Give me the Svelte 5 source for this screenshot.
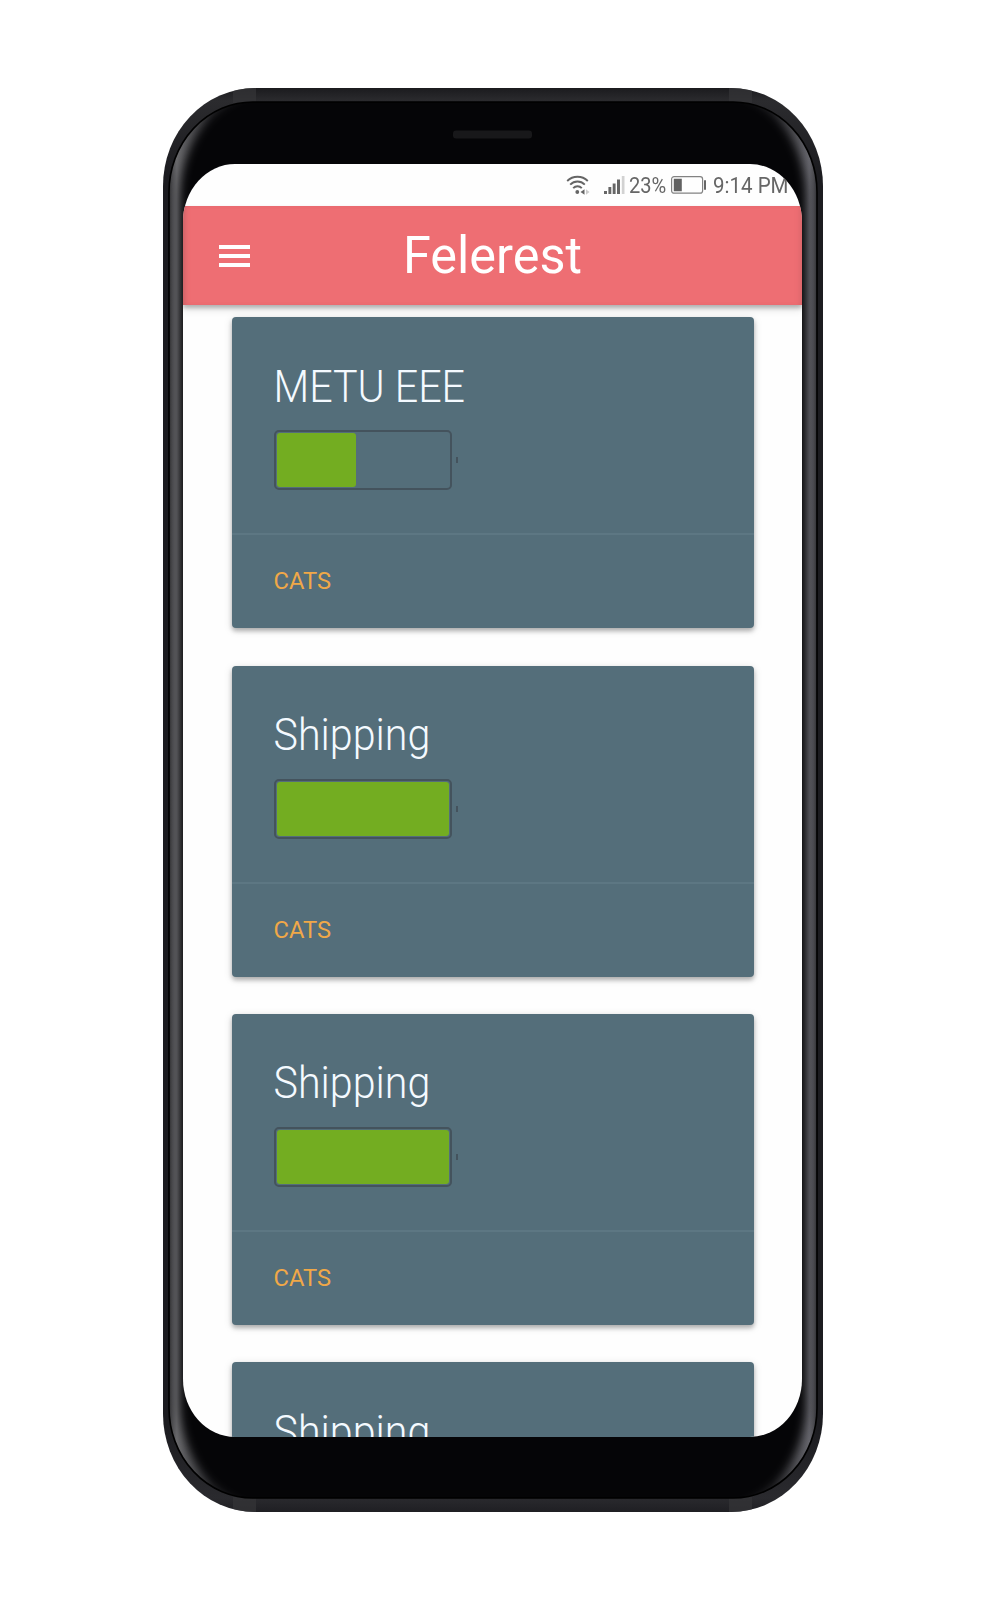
<script>
  const cards = [
    { title: 'METU EEE', level: 46 },
    { title: 'Shipping', level: 100 },
    { title: 'Shipping', level: 100 },
    { title: 'Shipping', level: 100 }
  ];
</script>

<main>
  <div class="phone">
    <svg class="shell" viewBox="0 0 660 1424" aria-hidden="true">
      <defs>
        <linearGradient id="side" x1="0" x2="1" y1="0" y2="0">
          <stop offset="0" stop-color="#2e2e30" />
          <stop offset=".005" stop-color="#4c4c4f" />
          <stop offset=".012" stop-color="#6c6c6f" />
          <stop offset=".03" stop-color="#58585b" />
          <stop offset=".07" stop-color="#2c2c2f" />
          <stop offset=".93" stop-color="#2c2c2f" />
          <stop offset=".97" stop-color="#55555a" />
          <stop offset=".988" stop-color="#67676e" />
          <stop offset=".995" stop-color="#4c4c51" />
          <stop offset="1" stop-color="#2e2e32" />
        </linearGradient>
        <linearGradient id="rim" x1="0" x2="0" y1="0" y2="1">
          <stop offset="0" stop-color="#1b1b1e" />
          <stop offset=".009" stop-color="#2b2b2e" />
          <stop offset=".06" stop-color="#1c1c20" />
          <stop offset=".94" stop-color="#1c1c20" />
          <stop offset=".99" stop-color="#2a2a2e" />
          <stop offset="1" stop-color="#1f1f23" />
        </linearGradient>
        <clipPath id="body"><rect width="660" height="1424" rx="92" ry="98" /></clipPath>
        <clipPath id="glass"><rect x="6" y="14" width="648" height="1396" rx="84" ry="90" /></clipPath>
        <filter id="soft" x="-10%" y="-10%" width="120%" height="120%" color-interpolation-filters="sRGB">
          <feGaussianBlur stdDeviation="5" />
        </filter>
      </defs>
      <g clip-path="url(#body)">
        <rect width="660" height="1424" fill="url(#rim)" />
        <path d="M70 0h23v15H70zM566 0h23v15h-23zM70 1409h23v15H70zM566 1409h23v15h-23z" fill="#343437" opacity=".75" />
      </g>
      <g clip-path="url(#glass)">
        <rect x="6" y="14" width="648" height="1396" fill="url(#side)" />
        <rect x="17" y="2" width="626" height="1420" rx="92" ry="108" fill="#050507" filter="url(#soft)" />
      </g>
      <rect x="6" y="14" width="648" height="1396" rx="84" ry="90" fill="none" stroke="#000" stroke-width="1.6" />
      <rect x="290" y="42.5" width="79" height="8" rx="3" fill="#18181a" />
    </svg>
    <div class="screen">
      <div class="status">
        <svg class="wifi" viewBox="0 0 24 22" fill="none" stroke="#656565" stroke-width="1.9">
          <path d="M1.2 7C7 1.4 16 1.4 21.8 7M4.2 10.6c4.1-4.2 10.5-4.2 14.6 0M7.2 14.2c2.4-2.6 6.2-2.6 8.6 0" />
          <circle cx="11.3" cy="18" r="1.9" fill="#656565" stroke="none" />
          <path d="M14.5 18l4-2.8v5.6z" fill="#656565" stroke="none" />
          <path d="M20 15.2l3.5 2.8-3.5 2.8z" fill="#ccc" stroke="none" />
        </svg>
        <svg class="signal" viewBox="0 0 21 20">
          <path d="M0 16h3v3H0zM4.4 12h2.9v7H4.4zM8.7 8.5h2.9V19H8.7zM13 4.5h3V19h-3z" fill="#666" />
          <path d="M17.8 1h2.7v18h-2.7z" fill="#d2d2d2" />
        </svg>
        <span class="percent">23%</span>
        <svg class="power" viewBox="0 0 36 18">
          <rect x=".6" y=".7" width="31" height="16.5" rx="2.5" fill="none" stroke="#828282" stroke-width="1.2" />
          <path d="M2.8 2.8h8v12.4h-8z" fill="#626262" />
          <path d="M33 4.2h2v9.6h-2z" fill="#666" />
        </svg>
        <span class="time">9:14 PM</span>
      </div>
      <header>
        <svg class="menu" viewBox="0 0 31 22"><path d="M0 0h31v4H0zM0 9h31v4H0zM0 18h31v4H0z" fill="#fff" /></svg>
        <h1>Felerest</h1>
      </header>
      <div class="list">
        {#each cards as card}
          <article>
            <div class="content">
              <h2>{card.title}</h2>
              <div class="battery">
                <div class="case"><div class="fill" style="width: {card.level}%"></div></div>
                <i></i>
              </div>
            </div>
            <div class="action"><span>CATS</span></div>
          </article>
        {/each}
      </div>
    </div>
  </div>
</main>

<style>
  :global(body) { background: #fff; }
  * { box-sizing: border-box; }
  main {
    height: 1600px;
    padding: 88px 0 0 163px;
    overflow: hidden;
    font-family: Roboto, sans-serif;
  }
  .phone {
    position: relative;
    width: 660px;
    height: 1424px;
    padding: 76px 21px 75px 20px;
  }
  .shell { position: absolute; inset: 0; width: 660px; height: 1424px; }
  .screen {
    position: relative;
    width: 619px;
    height: 1273px;
    overflow: hidden;
    border-radius: 52px / 58px;
    background: #fefefe;
  }
  .status {
    display: flex;
    height: 42px;
    padding: 0 0 0 383px;
    color: #666;
    font-size: 21.6px;
    line-height: 44px;
    white-space: nowrap;
  }
  .status svg { flex: none; }
  .status span { transform: scaleX(.95); transform-origin: left; }
  .wifi { width: 24px; height: 22px; margin-top: 10px; }
  .signal { width: 21px; height: 20px; margin: 11px 0 0 14px; }
  .percent { width: 38px; margin-left: 4px; }
  .status .percent { transform: scaleX(.93); }
  .power { width: 36px; height: 18px; margin: 12px 0 0 4px; }
  .time { margin-left: 6px; }
  header {
    position: relative;
    z-index: 1;
    display: grid;
    grid-template-columns: 35px 1fr 35px;
    align-items: center;
    height: 98.5px;
    background: #ee6e73;
    color: #fff;
    box-shadow: inset 5px 0 5px -3px #b95b60aa, inset -5px 0 5px -3px #b95b6066,
      0 3px 4px rgba(0, 0, 0, .24), 0 5px 8px rgba(0, 0, 0, .1);
  }
  .menu { width: 31px; height: 22px; margin: 1px 0 0 36px; }
  h1 {
    margin: 0;
    padding-top: 1.5px;
    font-size: 52px;
    line-height: 96px;
    font-weight: 400;
    text-align: center;
    transform: scaleX(.97);
  }
  .list { display: grid; gap: 37.4px; padding: 12.7px 48px 0 49px; }
  article {
    height: 311px;
    border-radius: 4px;
    background: #546e7a;
    box-shadow: 0 3px 4px rgba(0, 0, 0, .24), 0 2px 8px rgba(0, 0, 0, .15);
  }
  .content { height: 216px; padding: 41.5px 41.5px 0; }
  h2 {
    margin: 0;
    color: #f4faff;
    font-size: 43.6px;
    line-height: 56px;
    font-weight: 300;
    white-space: nowrap;
    transform: translate(-.5px, 1.3px) scaleX(.945);
    transform-origin: left;
  }
  .battery { display: flex; align-items: center; gap: 4px; margin-top: 15.8px; }
  .case {
    width: 178.5px;
    height: 60px;
    padding: 1px;
    border: 2px solid #44535d;
    border-radius: 5px;
  }
  .fill { height: 100%; border-radius: 3px; background: #73ad21; }
  .battery i { width: 2px; height: 6px; background: #44535d; }
  .action {
    display: flex;
    align-items: center;
    height: 95px;
    padding: 0 41.5px 2px;
    border-top: 2px solid #5d7783;
    color: #f0a848;
    font-size: 24.6px;
  }
  .action span { transform: translateX(-.4px) scaleX(.965); transform-origin: left; }
</style>
